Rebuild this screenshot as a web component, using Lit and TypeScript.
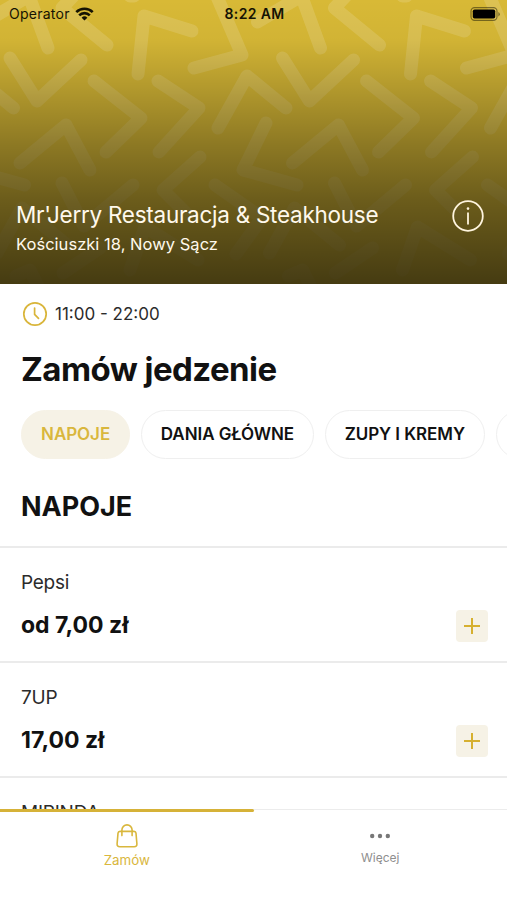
import { LitElement, html, css, svg } from "lit";
import { customElement } from "lit/decorators.js";

const CHEVRONS = [
  "10,58 37,101 81,60",
  "94,81 141,118 106,152",
  "158,81 199,108 159,152",
  "192,31 144,16 138,74",
  "194,68 242,55 215,-8",
  "218,128 247,76 286,108",
  "107,45 62,8 77,-8",
  "48,48 29,-4 -15,22",
  "20,163 66,125 90,170",
  "266,123 243,170 297,185",
  "200,157 163,190 187,214",
  "62,183 84,226 133,185",
  "215,185 262,218 236,254",
  "-3,253 22,208 67,245",
  "130,270 145,227 198,260",
  "63,273 100,248",
  "16,276 30,270 40,290",
  "130,-4 134,-4",
];
const TILE = 272.5;

const CATEGORIES = ["NAPOJE", "DANIA GŁÓWNE", "ZUPY I KREMY", ""];
const ITEMS = [
  { name: "Pepsi", price: "od 7,00 zł" },
  { name: "7UP", price: "17,00 zł" },
  { name: "MIRINDA", price: "" },
];

@customElement("app-root")
export class AppRoot extends LitElement {
  static styles = css`
    :host {
      display: flex;
      flex-direction: column;
      height: 900px;
      overflow: hidden;
      background: #fff;
      color: #111;
      font-family: Inter, "Liberation Sans", sans-serif;
      white-space: nowrap;
    }
    * { box-sizing: border-box; }
    svg { display: block; flex: none; }
    .hero {
      position: relative;
      flex: none;
      height: 284px;
      display: flex;
      flex-direction: column;
      justify-content: space-between;
      background: #d8b936;
    }
    .pattern {
      position: absolute;
      inset: 0;
      mask-image: linear-gradient(#000 0, #000 60px, rgba(0,0,0,.75) 150px, rgba(0,0,0,.35) 284px);
    }
    .shade {
      position: absolute;
      inset: 0;
      background: linear-gradient(rgba(0,0,0,0) 0, rgba(0,0,0,.03) 40px, rgba(0,0,0,.18) 90px, rgba(0,0,0,.35) 145px, rgba(0,0,0,.5) 200px, rgba(0,0,0,.68) 284px);
    }
    .status {
      position: relative;
      display: grid;
      grid-template-columns: 1fr auto 1fr;
      align-items: center;
      height: 27px;
      padding: 0 7px 0 9px;
      color: #151303;
    }
    .carrier { display: flex; align-items: center; gap: 5.5px; font-size: 14px; letter-spacing: .25px; }
    .time { font-size: 14px; font-weight: 600; letter-spacing: .35px; }
    .battery { justify-self: end; }
    .place {
      position: relative;
      display: flex;
      justify-content: space-between;
      padding: 0 22px 29px 16px;
      color: #fff9ec;
    }
    .title { font-size: 22.5px; line-height: 30px; letter-spacing: -.27px; }
    .address { font-size: 16.5px; line-height: 22px; margin-top: 3px; letter-spacing: .03px; }
    .info { margin-top: -1px; }
    .content { flex: 1; min-height: 0; overflow: hidden; }
    .hours {
      display: flex;
      align-items: center;
      gap: 7px;
      height: 60px;
      padding-left: 22px;
      font-size: 17px;
      color: #2b2b2b;
    }
    h1 { margin: 1px 0 0 21px; font-size: 33px; line-height: 48px; font-weight: 700; letter-spacing: -.55px; }
    .chips { display: flex; gap: 10.5px; padding: 17px 0 0 21px; }
    .chip {
      flex: none;
      min-width: 60px;
      height: 49px;
      padding: 0 19.1px;
      border: 1.5px solid #efefef;
      border-radius: 25px;
      line-height: 47px;
      font-size: 17px;
      font-weight: 600;
      letter-spacing: -.07px;
    }
    .chip.on { background: #f6f2e6; border-color: #f6f2e6; color: #d9b73d; }
    h2 { margin: 25px 0 0 21px; font-size: 27px; line-height: 46px; font-weight: 700; }
    .items { margin-top: 16px; }
    .item {
      display: flex;
      justify-content: space-between;
      align-items: flex-end;
      height: 115px;
      padding: 0 19px 19px 21px;
      border-top: 2px solid #ebebeb;
    }
    .text { align-self: flex-start; padding-top: 20px; }
    .name { font-size: 19px; line-height: 30px; color: #2b2b2b; letter-spacing: -.25px; }
    .price { font-size: 23px; line-height: 34px; font-weight: 700; margin-top: 10px; }
    .add {
      width: 32px;
      height: 32px;
      border-radius: 4px;
      background: #f6f2e6;
    }
    .tabs { position: relative; flex: none; display: flex; height: 91px; border-top: 1px solid #ececec; background: #fff; }
    .marker { position: absolute; left: 0; top: -1px; width: 254px; height: 3px; border-radius: 0 2px 2px 0; background: #d6b238; }
    .tab { flex: 1; display: flex; flex-direction: column; align-items: center; color: #8f8f8f; font-size: 12px; }
    .tab.on { color: #d9b73d; font-size: 13.3px; }
    .tab.on .label { margin-top: 3px; line-height: 18px; }
    .label { margin-top: 11px; line-height: 16px; }
    .bag { margin-top: 14px; }
    .dots { margin-top: 23px; }
  `;

  render() {
    return html`
      <header class="hero">
        <svg class="pattern" width="507" height="284" viewBox="0 0 507 284">
          <g fill="none" stroke="#fff" stroke-opacity=".14" stroke-width="13" stroke-linecap="round" stroke-linejoin="round">
            ${[-TILE, 0, TILE].map((dx) => svg`<g transform="translate(${dx} 0)">${CHEVRONS.map((p) => svg`<polyline points=${p}></polyline>`)}</g>`)}
          </g>
        </svg>
        <div class="shade"></div>
        <div class="status">
          <div class="carrier">
            <span>Operator</span>
            <svg width="19" height="14" viewBox="0 0 19 14" fill="none" stroke="currentColor" stroke-width="2.6">
              <path d="M1.3 5.2a11.6 11.6 0 0 1 16.4 0M4.2 8.3a7.5 7.5 0 0 1 10.6 0"></path>
              <path d="M9.5 13.6 6.6 10.7a4.1 4.1 0 0 1 5.8 0z" fill="currentColor" stroke="none"></path>
            </svg>
          </div>
          <div class="time">8:22 AM</div>
          <svg class="battery" width="30" height="14" viewBox="0 0 30 14">
            <rect x="1" y=".6" width="26" height="12.8" rx="3.6" fill="none" stroke="#151303" stroke-opacity=".5" stroke-width="1.1"></rect>
            <rect x="2.8" y="2.4" width="22.4" height="9.2" rx="1.8" fill="#000"></rect>
            <path d="M28.4 5v4.4q1.4-.7 1.4-2.2T28.4 5z" fill="#151303" fill-opacity=".5"></path>
          </svg>
        </div>
        <div class="place">
          <div>
            <div class="title">Mr'Jerry Restauracja &amp; Steakhouse</div>
            <div class="address">Kościuszki 18, Nowy Sącz</div>
          </div>
          <svg class="info" width="34" height="34" viewBox="0 0 34 34" fill="none" stroke="#fff5df" stroke-width="1.8">
            <circle cx="17" cy="17" r="14.8"></circle>
            <path d="M17 13.4v12" stroke-width="1.8"></path>
            <circle cx="17" cy="9.6" r="1.3" fill="#fff5df" stroke="none"></circle>
          </svg>
        </div>
      </header>
      <main class="content">
        <div class="hours">
          <svg width="26" height="26" viewBox="0 0 26 26" fill="none" stroke="#d9b53a" stroke-width="1.7" stroke-linecap="round" stroke-linejoin="round">
            <circle cx="13" cy="13" r="11.2"></circle>
            <path d="M12.6 7v6.4l3.9 4"></path>
          </svg>
          <span>11:00 - 22:00</span>
        </div>
        <h1>Zamów jedzenie</h1>
        <div class="chips">
          ${CATEGORIES.map((c, i) => html`<div class="chip ${i === 0 ? "on" : ""}">${c}</div>`)}
        </div>
        <h2>NAPOJE</h2>
        <div class="items">
          ${ITEMS.map((it) => html`
            <div class="item">
              <div class="text">
                <div class="name">${it.name}</div>
                <div class="price">${it.price}</div>
              </div>
              <svg class="add" viewBox="0 0 32 32" stroke="#d6b030" stroke-width="2">
                <path d="M16 8v16M8 16h16"></path>
              </svg>
            </div>`)}
        </div>
      </main>
      <nav class="tabs">
        <div class="marker"></div>
        <div class="tab on">
          <svg class="bag" width="22" height="24" viewBox="0 0 22 24" fill="none" stroke="currentColor" stroke-width="1.6" stroke-linecap="round" stroke-linejoin="round">
            <path d="M4 7.4h14q1.800 0 2 1.800l.9 10.600q.2 3-2.700 3H3.800q-2.900 0-2.700-3L2 9.200q.2-1.800 2-1.800z"></path>
            <path d="M5.900 11.600V6a5.100 5.100 0 0 1 10.200 0v5.600"></path>
          </svg>
          <div class="label">Zamów</div>
        </div>
        <div class="tab">
          <svg class="dots" width="22" height="6" viewBox="0 0 22 6" fill="#777">
            <circle cx="3.200" cy="3" r="2.200"></circle><circle cx="11" cy="3" r="2.200"></circle><circle cx="18.800" cy="3" r="2.200"></circle>
          </svg>
          <div class="label">Więcej</div>
        </div>
      </nav>
    `;
  }
}
